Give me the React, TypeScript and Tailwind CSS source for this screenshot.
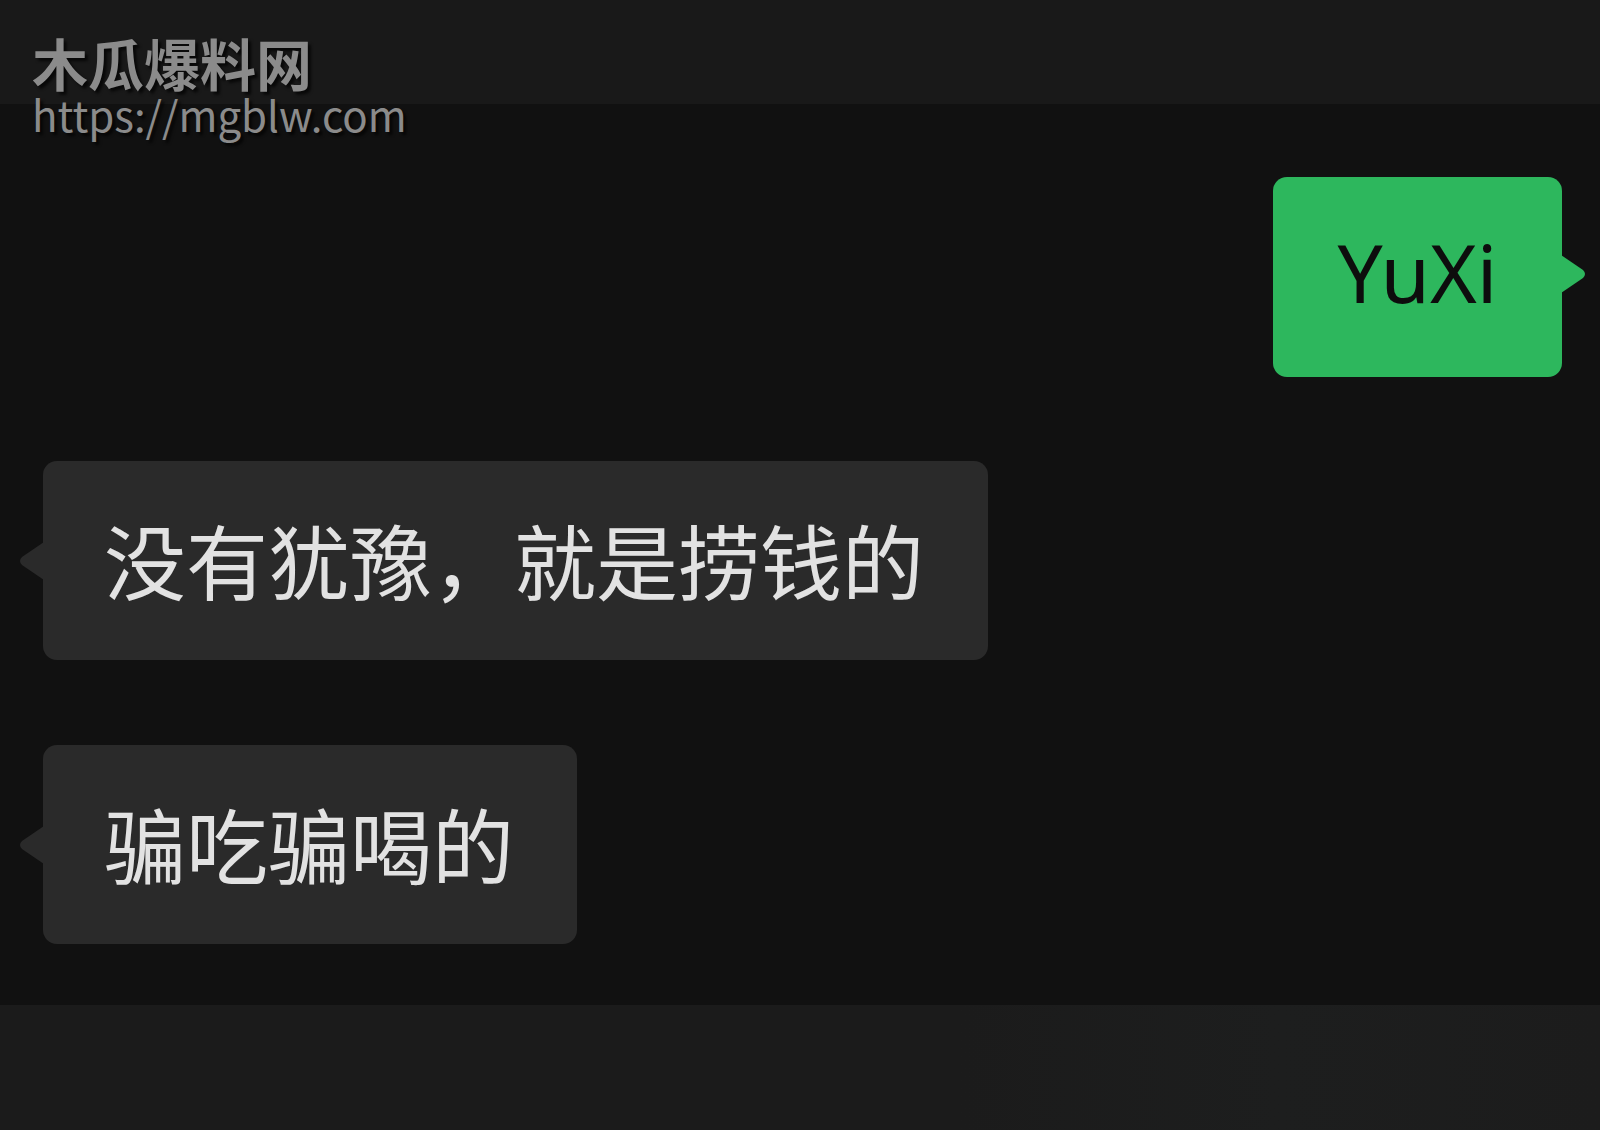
import React from "react";

const cjk = { fontFamily: '"Noto Sans CJK SC", "Noto Sans", sans-serif' };

function LeftBubble({ text, width }: { text: string; width: string }) {
  return (
    <div className={`relative ${width} h-[199px] rounded-[14px] bg-[#2a2a2a] flex items-center pl-[61px]`}>
      <svg
        className="absolute left-[-25px] top-1/2 -translate-y-1/2"
        width="26"
        height="38"
        viewBox="0 0 26 38"
      >
        <path d="M26 0 L4 15 Q0 19 4 23 L26 38 Z" fill="#2a2a2a" />
      </svg>
      <span className="text-[82px] leading-none text-[#e2e2e2] pb-[4px]" style={cjk}>
        {text}
      </span>
    </div>
  );
}

export default function App() {
  return (
    <div className="relative w-[1600px] h-[1130px] overflow-hidden bg-[#111111] flex flex-col" style={cjk}>
      <div className="h-[104px] bg-[#191919] shrink-0" />
      <div className="flex-1 flex flex-col px-[43px] pt-[73px]">
        <div className="flex justify-end">
          <div className="relative mr-[-5px] w-[289px] h-[200px] rounded-[14px] bg-[#2db75d] flex items-center justify-center pb-[10px]">
            <span
              className="text-[80px] leading-none text-[#0d0d0d]"
              style={{ fontFamily: '"Noto Sans", "Liberation Sans", sans-serif' }}
            >
              YuXi
            </span>
            <svg
              className="absolute right-[-25px] top-[78px]"
              width="26"
              height="38"
              viewBox="0 0 26 38"
            >
              <path d="M0 0 L22 15 Q26 19 22 23 L0 38 Z" fill="#2db75d" />
            </svg>
          </div>
        </div>
        <div className="flex flex-col gap-[85px] mt-[84px] items-start">
          <LeftBubble text="没有犹豫，就是捞钱的" width="w-[945px]" />
          <LeftBubble text="骗吃骗喝的" width="w-[534px]" />
        </div>
      </div>
      <div className="h-[125px] shrink-0 bg-[linear-gradient(90deg,#1b1b1b_0%,#1b1b1b_60%,#1d1e1e_80%,#1c1c1c_100%)]" />
      <div className="absolute left-[32px] top-[34px] flex flex-col">
        <span
          className="text-[56px] font-bold leading-[56px] h-[58px] text-[#8b8b8b] [text-shadow:3px_3px_3px_rgba(0,0,0,0.7)]"
          style={cjk}
        >
          木瓜爆料网
        </span>
        <span
          className="text-[42px] leading-[44px] text-[#8b8b8b] [text-shadow:3px_3px_3px_rgba(0,0,0,0.7)]"
          style={cjk}
        >
          https://mgblw.com
        </span>
      </div>
    </div>
  );
}
